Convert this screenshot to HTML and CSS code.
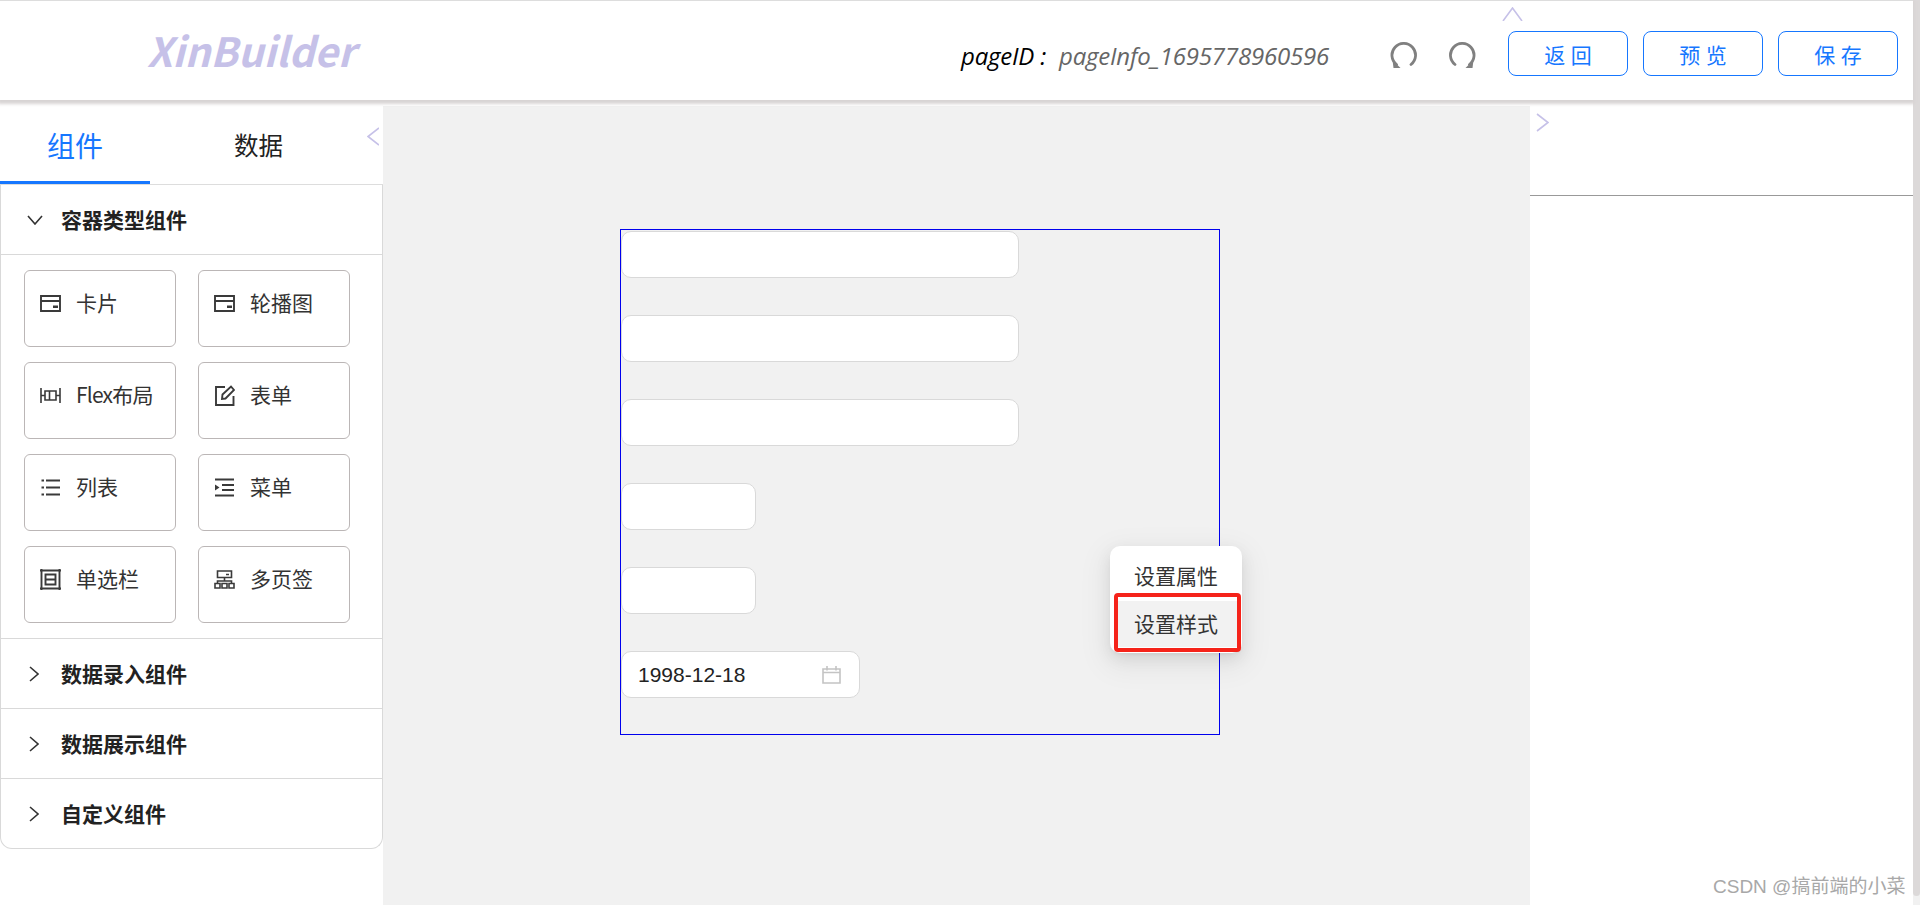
FILE: index.html
```html
<!DOCTYPE html>
<html lang="zh">
<head>
<meta charset="utf-8">
<title>XinBuilder</title>
<link rel="stylesheet" href="styles.css">
</head>
<body>
<div class="page">
  <header class="header">
    <div class="logo">XinBuilder</div>
    <div class="page-id"><span class="pid-label">pageID :</span><span class="pid-value">pageInfo_1695778960596</span></div>
    <div class="history">
      <svg class="hist-icon" viewBox="0 0 28 26"><path d="M7.500 22.500A11.800 11.800 0 1 1 22 22.500" fill="none" stroke="#808080" stroke-width="2.800" stroke-linecap="round"/><path d="M3.500 18l8 8H4.500z" fill="#808080"/></svg>
      <svg class="hist-icon" viewBox="0 0 28 26"><path d="M6 22.500A11.800 11.800 0 1 1 20.500 22.500" fill="none" stroke="#808080" stroke-width="2.800" stroke-linecap="round"/><path d="M24.500 18l-8 8h7z" fill="#808080"/></svg>
    </div>
    <div class="actions">
      <button class="btn">返 回</button>
      <button class="btn">预 览</button>
      <button class="btn">保 存</button>
    </div>
    <svg class="chev chev-up" viewBox="0 0 21 14"><path d="M1 14 10.500 1 20 14" /></svg>
  </header>
  <main class="main">
    <aside class="left">
      <div class="tabs">
        <div class="tab active">组件</div>
        <div class="tab">数据</div>
        <svg class="chev chev-left" viewBox="0 0 12 19"><path d="M12 1 1 9.500 12 18"/></svg>
      </div>
      <div class="collapse">
        <div class="section-head">
          <svg class="arrow" viewBox="0 0 16 10"><path d="M1 1l7 8 7-8"/></svg><span>容器类型组件</span>
        </div>
        <div class="section-body">
          <div class="card"><svg class="ico" viewBox="0 0 21 21"><path d="M1 3h19v15H1zM1 8h19"/><path class="solid" d="M13 12.500h5v2.500h-5z"/></svg><span>卡片</span></div>
          <div class="card"><svg class="ico" viewBox="0 0 21 21"><path d="M1 3h19v15H1zM1 8h19"/><path class="solid" d="M13 12.500h5v2.500h-5z"/></svg><span>轮播图</span></div>
          <div class="card"><svg class="ico thin" viewBox="0 0 21 21"><path d="M1 3v15M20 3v15M1 10.500h4M16 10.500h4M5 6h11v9H5zM9.500 6v9"/></svg><span class="tight">Flex布局</span></div>
          <div class="card"><svg class="ico" viewBox="0 0 21 21"><path d="M11 2H2v18h17.500v-9M8 14l.5-4.500L17 1.500l3 3.500-8.500 8.500z"/></svg><span>表单</span></div>
          <div class="card"><svg class="ico" viewBox="0 0 21 21"><path d="M6 3.500h14M6 10.500h14M6 17.500h14M1.500 3.500H4M1.500 10.500H4M1.500 17.500H4"/></svg><span>列表</span></div>
          <div class="card"><svg class="ico" viewBox="0 0 21 21"><path d="M1 2.500h19M8 8h12M8 13h12M1 18.500h19"/><path class="solid" d="M1 7.500l4.500 3-4.500 3z"/></svg><span>菜单</span></div>
          <div class="card"><svg class="ico" viewBox="0 0 21 21"><path d="M1.500 0v21M19.500 0v21M0 1.500h21M0 19.500h21M5.500 5.500h10v10h-10zM5.500 10.500h10"/></svg><span>单选栏</span></div>
          <div class="card"><svg class="ico thin" viewBox="0 0 21 21"><path d="M3.500 2h14v6.500h-14zM10.500 8.500V12M3.500 14.500V12h14v2.500M1 14.500h5V19H1zM8 14.500h5V19H8zM15 14.500h5V19h-5zM12 5.500h3"/></svg><span>多页签</span></div>
        </div>
        <div class="section-head closed">
          <svg class="arrow right" viewBox="0 0 10 16"><path d="M1 1l8 7-8 7"/></svg><span>数据录入组件</span>
        </div>
        <div class="section-head closed">
          <svg class="arrow right" viewBox="0 0 10 16"><path d="M1 1l8 7-8 7"/></svg><span>数据展示组件</span>
        </div>
        <div class="section-head closed last">
          <svg class="arrow right" viewBox="0 0 10 16"><path d="M1 1l8 7-8 7"/></svg><span>自定义组件</span>
        </div>
      </div>
    </aside>
    <section class="canvas">
      <div class="form-box">
        <div class="field wide"></div>
        <div class="field wide"></div>
        <div class="field wide"></div>
        <div class="field narrow"></div>
        <div class="field narrow"></div>
        <div class="field date"><span>1998-12-18</span>
          <svg class="cal" viewBox="0 0 19 19"><path d="M1 4h17v14H1zM1 7.500h17M5 1v4.500M14 1v4.500"/></svg>
        </div>
      </div>
      <div class="menu">
        <div class="menu-item">设置属性</div>
        <div class="menu-item hover">设置样式</div>
        <div class="mark"></div>
      </div>
    </section>
    <aside class="right">
      <svg class="chev chev-right" viewBox="0 0 13 19"><path d="M1 1l11 8.500L1 18"/></svg>
      <div class="right-head"></div>
    </aside>
  </main>
  <div class="watermark">CSDN @搞前端的小菜</div>
  <div class="scrollbar"><div class="thumb"></div></div>
</div>
</body>
</html>
```
FILE: styles.css
```css
* { box-sizing: border-box; }
html, body { margin: 0; padding: 0; height: 905px; overflow: hidden; background: #fff; }
body { font-family: "Noto Sans CJK SC", "Noto Sans", sans-serif; color: #222; }
.page { position: relative; width: 1920px; height: 905px; padding-right: 7px; display: flex; flex-direction: column; }
.header { position: relative; height: 100px; flex: none; border-top: 1px solid #ddd; background: #fff; display: flex; align-items: center; box-shadow: 0 2px 3px 2px #d8d4d4; z-index: 2; }
.logo { margin-left: 147px; width: 792px; font: italic 700 40.300px/1 "Noto Sans CJK SC", "Noto Sans", sans-serif; color: #c6c1e8; flex: none; }
.page-id { display: flex; align-items: center; font: italic 24px/1 "Open Sans", sans-serif; width: 428px; margin-left: 22px; flex: none; margin-top: 10px; letter-spacing: -.2px; white-space: nowrap; }
.pid-label { color: #000; width: 98px; flex: none; }
.pid-value { color: #666; }
.history { display: flex; gap: 32px; width: 119px; flex: none; margin-top: 8px; }
.hist-icon { width: 28px; height: 26px; flex: none; }
.actions { display: flex; gap: 15px; margin-top: 6px; flex: none; }
.btn { width: 120px; height: 45px; border: 1px solid #1677ff; border-radius: 8px; background: #fff; color: #1677ff; font: 21px/1 "Noto Sans CJK SC", sans-serif; padding: 1px 0 0; word-spacing: 1px; }
.chev { position: absolute; fill: none; stroke: #c6c1e8; stroke-width: 1.600; }
.chev-up { left: 1502px; top: 6px; width: 21px; height: 14px; }
.chev-left { left: 367px; top: 21px; width: 12px; height: 19px; }
.chev-right { left: 6px; top: 7px; width: 13px; height: 19px; }
.main { flex: 1; display: flex; margin-top: 6px; min-height: 0; }
.left { position: relative; width: 383px; flex: none; background: #fff; }
.tabs { position: relative; display: flex; height: 79px; border-bottom: 1px solid #ddd; }
.tab { width: 150px; flex: none; text-align: center; font-size: 24.500px; line-height: 78px; color: #222; }
.tab + .tab { width: 217px; }
.tab.active { font-size: 28px; color: #1677ff; border-bottom: 3px solid #1677ff; }
.collapse { border: 1px solid #d9d9d9; border-top: 0; border-radius: 0 0 12px 12px; }
.section-head { height: 70px; display: flex; align-items: center; border-bottom: 1px solid #d9d9d9; padding-left: 26px; font-weight: 700; font-size: 21px; color: #222; }
.section-head.last { border-bottom: 0; height: 69px; }
.section-head span { margin-left: 18px; margin-top: -1px; }
.section-head.closed span { margin-left: 22px; margin-top: -2px; }
.arrow { width: 16px; height: 10px; fill: none; stroke: #333; stroke-width: 1.600; flex: none; }
.arrow.right { width: 10px; height: 16px; margin-left: 2px; }
.section-body { display: grid; grid-template-columns: 152px 152px; grid-auto-rows: 77px; gap: 15px 22px; padding: 15px 0 14px 23px; border-bottom: 1px solid #d9d9d9; height: 384px; }
.card { border: 1px solid #bbb6b6; border-radius: 6px; display: flex; align-items: flex-start; padding: 15px 0 0 15px; font-size: 21px; line-height: 32px; color: #333; }
.tight { letter-spacing: -.8px; }
.ico { width: 21px; height: 21px; margin: 6.500px 15px 0 0; flex: none; fill: none; stroke: #3a3a3a; stroke-width: 1.900; }
.ico.thin { stroke-width: 1.600; }
.ico .solid { fill: #3a3a3a; stroke: none; }
.canvas { position: relative; flex: 1; background: #f1f1f1; }
.form-box { position: absolute; left: 237px; top: 123px; width: 600px; height: 506px; border: 1px solid #0000ee; padding: 1px 0 0; display: flex; flex-direction: column; gap: 37px; }
.field { height: 47px; background: #fff; border: 1px solid #d9d9d9; border-radius: 10px; flex: none; }
.wide { width: 398px; }
.narrow { width: 135px; }
.date { width: 239px; display: flex; align-items: center; justify-content: space-between; padding: 0 18px 0 16px; font: 21px/1 "Liberation Sans", sans-serif; color: #222; }
.cal { width: 19px; height: 19px; fill: none; stroke: #c4c4c4; stroke-width: 1.600; flex: none; }
.menu { position: absolute; left: 727px; top: 440px; width: 132px; height: 107px; background: #fff; border-radius: 10px; box-shadow: 0 6px 16px 0 rgba(0,0,0,.08), 0 3px 6px -4px rgba(0,0,0,.12), 0 9px 28px 8px rgba(0,0,0,.05); font-size: 21px; text-align: center; color: #333; }
.menu-item { height: 48px; line-height: 48px; margin: 5px 0 0; }
.menu-item.hover { background: #f2f2f2; margin: 2px 2px 0 6px; height: 46px; line-height: 44px; padding-right: 4px; }
.mark { position: absolute; left: 4px; top: 47px; width: 127px; height: 59px; border: 4.500px solid #f5231a; border-radius: 4px; }
.right { position: relative; width: 383px; flex: none; background: #fff; }
.right-head { height: 90px; border-bottom: 1px solid #999; }
.watermark { position: absolute; left: 1713px; top: 875px; font: 19px/24px "Liberation Sans", "Noto Sans CJK SC", sans-serif; color: #a8a8a8; white-space: nowrap; }
.scrollbar { position: absolute; right: 0; top: 0; bottom: 0; width: 7px; background: #f1f1f1; }
.thumb { height: 896px; background: #dcd9d9; border-radius: 0 0 4px 4px; }
```
